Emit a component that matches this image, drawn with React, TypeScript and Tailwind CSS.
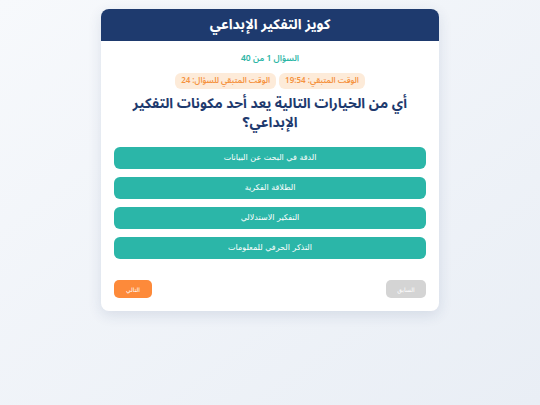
import React from 'react';

const options = [
  'الدقة في البحث عن البيانات',
  'الطلاقة الفكرية',
  'التفكير الاستدلالي',
  'التذكر الحرفي للمعلومات',
];

const App: React.FC = () => {
  return (
    <div
      dir="rtl"
      className="min-h-[405px] w-full bg-gradient-to-br from-[#f7f9fc] to-[#e9eef5] pt-[9px]"
      style={{ fontFamily: '"Noto Sans Arabic", "DejaVu Sans", sans-serif' }}
    >
      <div className="mx-auto w-[338px] overflow-hidden rounded-lg bg-white shadow-[0_4px_14px_rgba(30,58,110,0.12)]">
        <div className="flex h-[32px] items-center justify-center bg-[#1e3a6e]">
          <h1 className="text-[14px] font-bold leading-[20px] text-white">كويز التفكير الإبداعي</h1>
        </div>

        <div className="px-[13px] pb-[13px] pt-[11px]">
          <div className="text-center text-[8.5px] font-semibold leading-[12px] text-[#2bb5a5]">السؤال 1 من 40</div>

          <div className="mt-[9px] flex justify-center gap-[3px]">
            <span className="rounded-md bg-[#fdebd9] px-[6px] py-[3px] text-[8px] font-semibold leading-[10px] text-[#f5923e]">
              الوقت المتبقي: 19:54
            </span>
            <span className="rounded-md bg-[#fdebd9] px-[6px] py-[3px] text-[8px] font-semibold leading-[10px] text-[#f5923e]">
              الوقت المتبقي للسؤال: 24
            </span>
          </div>

          <h2 className="mx-auto mt-[5px] w-[290px] text-center text-[14px] font-bold leading-[19px] text-[#1e3a6e]">
            أي من الخيارات التالية يعد أحد مكونات التفكير الإبداعي؟
          </h2>

          <div className="mt-[15px] flex flex-col gap-[8px]">
            {options.map((opt) => (
              <button
                key={opt}
                className="flex h-[22px] w-full items-center justify-center rounded-md bg-[#2bb6a8] text-[8px] text-white"
                style={{ fontFamily: '"DejaVu Sans", sans-serif' }}
              >
                {opt}
              </button>
            ))}
          </div>

          <div className="mt-[21px] flex justify-between">
            <button
              className="h-[18px] w-[40px] rounded-[5px] bg-[#d4d4d4] text-[6px] text-white"
              style={{ fontFamily: '"DejaVu Sans", sans-serif' }}
            >
              السابق
            </button>
            <button
              className="h-[18px] w-[38px] rounded-[5px] bg-[#fd8a3a] text-[6px] text-white"
              style={{ fontFamily: '"DejaVu Sans", sans-serif' }}
            >
              التالي
            </button>
          </div>
        </div>
      </div>
    </div>
  );
};

export default App;
